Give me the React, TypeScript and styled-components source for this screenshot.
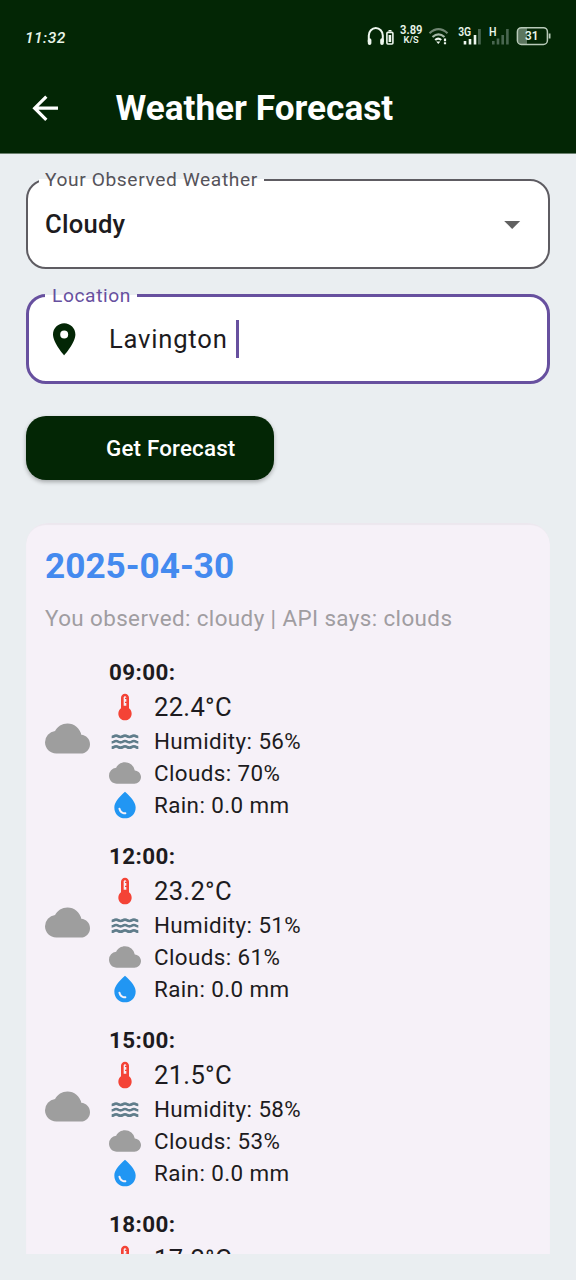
import React from "react";
import styled, { createGlobalStyle } from "styled-components";
import { MdWater } from "react-icons/md";

const GlobalStyle = createGlobalStyle`
  * { box-sizing: border-box; }
  html, body { margin: 0; padding: 0; background: #eaeef1; }
  body { font-family: Roboto, "Liberation Sans", sans-serif; color: #1d1b20; overflow: hidden; }
`;

const Screen = styled.div`
  width: 576px;
  height: 1280px;
  display: flex;
  flex-direction: column;
  background: #eaeef1;
  overflow: hidden;
`;

const Header = styled.header`
  height: 154px;
  flex: none;
  background: #032605;
  border-bottom: 1px solid #6b806e;
  color: #fff;
  display: flex;
  flex-direction: column;
`;

const StatusBar = styled.div`
  height: 64px;
  padding: 10px 24px 0 25px;
  display: flex;
  align-items: center;
  justify-content: space-between;
`;

const Clock = styled.span`
  margin-top: 2px;
  font: italic 500 15.5px Roboto, sans-serif;
  letter-spacing: 0.5px;
  color: #e9f5ea;
`;

const StatusIcons = styled.svg`
  display: block;
  width: 186px;
  height: 24px;
  margin-top: -2px;
  text {
    font-family: Roboto, sans-serif;
    font-weight: 600;
    fill: #e9f5ea;
  }
`;

const AppBar = styled.div`
  height: 89px;
  padding-left: 26px;
  display: flex;
  align-items: center;
  gap: 51px;
`;

const Title = styled.h1`
  margin: 0 0 1px;
  font-size: 35.2px;
  line-height: 44px;
  font-weight: 700;
  white-space: nowrap;
`;

const Content = styled.main`
  flex: 1;
  min-height: 0;
  padding: 25px 26px 26px;
  display: flex;
  flex-direction: column;
`;

const Field = styled.div<{ $focused?: boolean }>`
  position: relative;
  flex: none;
  height: 90px;
  margin-bottom: ${(p) => (p.$focused ? 32 : 25)}px;
  border: ${(p) => (p.$focused ? "3px solid #67509f" : "2px solid #5e5c62")};
  border-radius: 20px;
  background: #fff;
  display: flex;
  align-items: center;
  padding: 0 ${(p) => (p.$focused ? 16 : 17)}px;
`;

const FieldLabel = styled.label<{ $left: number; $color: string; $edge: number; $pad: number }>`
  position: absolute;
  left: ${(p) => p.$left}px;
  top: -${(p) => 11 + p.$edge}px;
  height: 22px;
  padding: 0 6px 0 ${(p) => p.$pad}px;
  line-height: 23px;
  font-size: 19.2px;
  letter-spacing: 0.6px;
  white-space: nowrap;
  color: ${(p) => p.$color};
  background: linear-gradient(#eaeef1 50%, #fff 50%);
`;

const SelectedValue = styled.span`
  flex: 1;
  margin-bottom: 1px;
  font-size: 25.6px;
  font-weight: 500;
  letter-spacing: 0.24px;
`;

const TypedValue = styled.span`
  margin: 0 0 1px 25.5px;
  font-size: 25.6px;
  letter-spacing: 0.8px;
  white-space: pre;
`;

const Caret = styled.span`
  width: 3px;
  height: 38px;
  margin-left: 1px;
  background: #67509f;
`;

const SubmitButton = styled.button`
  flex: none;
  width: 248px;
  height: 64px;
  padding: 0 0 0 80px;
  border: 0;
  border-radius: 20px;
  background: #032605;
  color: #fff;
  font: 500 22.4px Roboto, sans-serif;
  letter-spacing: 0.16px;
  text-align: left;
  box-shadow: 0 2px 4px rgba(0, 0, 0, 0.3);
`;

const Results = styled.div`
  flex: 1;
  min-height: 0;
  margin-top: 43px;
  overflow: hidden;
  border-radius: 22px 22px 0 0;
`;

const Card = styled.section`
  height: 760px;
  padding: 20px 19px;
  background: #f6f1f8;
  border-radius: 20px 20px 0 0;
  box-shadow: inset 0 2px 1px rgba(0, 0, 0, 0.04);
`;

const CardDate = styled.h2`
  margin: 0;
  height: 46px;
  line-height: 46px;
  font-size: 35.2px;
  font-weight: 700;
  color: #448aef;
`;

const Summary = styled.p`
  margin: 12px 0 19px;
  height: 34px;
  line-height: 34px;
  font-size: 22.4px;
  letter-spacing: 0.4px;
  color: #a09da1;
  white-space: nowrap;
`;

const Entry = styled.article`
  height: 168px;
  margin-bottom: 16px;
  display: flex;
  align-items: center;
  gap: 19px;
`;

const Details = styled.div`
  height: 168px;
  padding-top: 1px;
  display: flex;
  flex-direction: column;
`;

const Time = styled.h3`
  margin: 0;
  height: 34px;
  line-height: 34px;
  font-size: 22.4px;
  font-weight: 700;
  letter-spacing: 0.4px;
`;

const Metric = styled.div<{ $large?: boolean }>`
  flex: none;
  height: ${(p) => (p.$large ? 36 : 32)}px;
  display: flex;
  align-items: center;
  gap: 13px;
  font-size: ${(p) => (p.$large ? 25.6 : 22.4)}px;
  letter-spacing: ${(p) => (p.$large ? 0.3 : 0.4)}px;
  white-space: nowrap;
`;

const Glyph = styled.svg`
  display: block;
  flex: none;
`;

const paths = {
  back: "M20 11H7.83l5.59-5.59L12 4l-8 8 8 8 1.41-1.41L7.83 13H20v-2z",
  pin: "M12 2C8.13 2 5 5.13 5 9c0 5.25 7 13 7 13s7-7.75 7-13c0-3.87-3.13-7-7-7zm0 9.5a2.5 2.5 0 0 1 0-5 2.5 2.5 0 0 1 0 5z",
  drop: "M7 10l5 5 5-5z",
  cloud:
    "M19.35 10.04A7.49 7.49 0 0 0 12 4C9.11 4 6.6 5.64 5.35 8.04A5.994 5.994 0 0 0 0 14c0 3.31 2.69 6 6 6h13c2.76 0 5-2.24 5-5 0-2.64-2.05-4.78-4.65-4.96z",
  thermometer:
    "M15 13V5c0-1.66-1.34-3-3-3S9 3.34 9 5v8c-1.21.91-2 2.37-2 4 0 2.76 2.24 5 5 5s5-2.24 5-5c0-1.63-.79-3.09-2-4zm-4-8c0-.55.45-1 1-1s1 .45 1 1h-1v1h1v2h-1v1h1v2h-2V5z",
  rain:
    "M12 2c-5.33 4.55-8 8.48-8 11.8 0 4.98 3.8 8.2 8 8.2s8-3.22 8-8.2c0-3.32-2.67-7.25-8-11.8zM7.83 14c.37 0 .67.26.74.62.41 2.22 2.28 2.98 3.64 2.87.43-.02.79.32.79.75 0 .4-.32.73-.72.75-2.13.13-4.62-1.09-5.19-4.12-.08-.45.28-.87.74-.87z",
};

function Icon({ name, size, color }: { name: keyof typeof paths; size: number; color: string }) {
  return (
    <Glyph width={size} height={size} viewBox="0 0 24 24" fill={color} aria-hidden>
      <path d={paths[name]} />
    </Glyph>
  );
}

function SystemIcons() {
  return (
    <StatusIcons viewBox="366 24 186 24">
      <g fill="none" stroke="#eef7ef">
        <path d="M368.8 42v-6.5a7 7.5 0 0 1 14 0V42" strokeWidth="2" />
        <path d="M369.6 40v3.2M382 40v3.2" strokeWidth="3.6" strokeLinecap="round" />
        <rect x="386.9" y="32.4" width="6" height="11.6" rx="1" strokeWidth="1.6" />
        <path d="M388.5 30.7h3" strokeWidth="1.4" />
        <path d="M389.9 35v7" strokeWidth="2.6" />
      </g>
      <text x="400" y="34.2" fontSize="12.5" textLength="22.5" lengthAdjust="spacingAndGlyphs">3.89</text>
      <text x="403.6" y="43.4" fontSize="9.5" textLength="15" lengthAdjust="spacingAndGlyphs">K/S</text>
      <g fill="none" strokeWidth="2.2">
        <path d="M429.5 33.3q9-8.2 18 0" stroke="#708672" />
        <path d="M432.5 37q6-5.4 12 0" stroke="#a5b8a7" />
        <path d="M435.2 40q3-2.6 6 0" stroke="#eef7ef" />
      </g>
      <path d="M436.2 41.6h4.2l-2.1 2.5z" fill="#eef7ef" />
      <path d="M445 38.5v2.8M445 42.2v2" stroke="#eef7ef" strokeWidth="2.2" />
      <text x="458.2" y="36" fontSize="12" textLength="13" lengthAdjust="spacingAndGlyphs">3G</text>
      <path d="M465 41v3.5M470 39v5.5M475 35v9.5" stroke="#eef7ef" strokeWidth="2.6" />
      <path d="M479.4 29v15.5" stroke="#496650" strokeWidth="2.8" />
      <text x="489" y="36" fontSize="12" textLength="7.5" lengthAdjust="spacingAndGlyphs">H</text>
      <path d="M493.3 41v3.5M498 38.5v6M502.7 35v9.5M507.4 29v15.5" stroke="#496650" strokeWidth="2.6" />
      <path d="M521 28h6v16h-6a3 3 0 0 1-3-3V31a3 3 0 0 1 3-3z" fill="#5c765f" />
      <rect x="517.4" y="27.7" width="30" height="16.7" rx="4" fill="none" stroke="#b8cab9" strokeWidth="1.5" />
      <path d="M549.6 33.5v5" stroke="#b8cab9" strokeWidth="1.8" />
      <text x="525" y="40.4" fontSize="12.5" textLength="13.5" lengthAdjust="spacingAndGlyphs">31</text>
    </StatusIcons>
  );
}

type Reading = { time: string; temp: string; humidity?: number; clouds?: number; rain?: string };

const forecast: Reading[] = [
  { time: "09:00", temp: "22.4", humidity: 56, clouds: 70, rain: "0.0" },
  { time: "12:00", temp: "23.2", humidity: 51, clouds: 61, rain: "0.0" },
  { time: "15:00", temp: "21.5", humidity: 58, clouds: 53, rain: "0.0" },
  { time: "18:00", temp: "17.2" },
];

export default function App() {
  return (
    <Screen>
      <GlobalStyle />
      <Header>
        <StatusBar>
          <Clock>11:32</Clock>
          <SystemIcons />
        </StatusBar>
        <AppBar>
          <Icon name="back" size={38.4} color="#fff" />
          <Title>Weather Forecast</Title>
        </AppBar>
      </Header>
      <Content>
        <Field>
          <FieldLabel $left={11} $pad={6} $edge={2} $color="#55535a">Your Observed Weather</FieldLabel>
          <SelectedValue>Cloudy</SelectedValue>
          <Icon name="drop" size={38.4} color="#616161" />
        </Field>
        <Field $focused>
          <FieldLabel $left={16} $pad={7} $edge={2} $color="#67509f">Location</FieldLabel>
          <Icon name="pin" size={38.4} color="#032605" />
          <TypedValue>Lavington </TypedValue>
          <Caret />
        </Field>
        <SubmitButton>Get Forecast</SubmitButton>
        <Results>
          <Card>
            <CardDate>2025-04-30</CardDate>
            <Summary>You observed: cloudy | API says: clouds</Summary>
            {forecast.map((f) => (
              <Entry key={f.time}>
                <Icon name="cloud" size={45} color="#9e9e9e" />
                <Details>
                  <Time>{f.time}:</Time>
                  <Metric $large>
                    <Icon name="thermometer" size={32} color="#f44336" />
                    {f.temp}°C
                  </Metric>
                  {f.humidity !== undefined && (
                    <Metric>
                      <MdWater size={32} color="#607d8b" />
                      Humidity: {f.humidity}%
                    </Metric>
                  )}
                  {f.clouds !== undefined && (
                    <Metric>
                      <Icon name="cloud" size={32} color="#9e9e9e" />
                      Clouds: {f.clouds}%
                    </Metric>
                  )}
                  {f.rain !== undefined && (
                    <Metric>
                      <Icon name="rain" size={32} color="#2196f3" />
                      Rain: {f.rain} mm
                    </Metric>
                  )}
                </Details>
              </Entry>
            ))}
          </Card>
        </Results>
      </Content>
    </Screen>
  );
}
